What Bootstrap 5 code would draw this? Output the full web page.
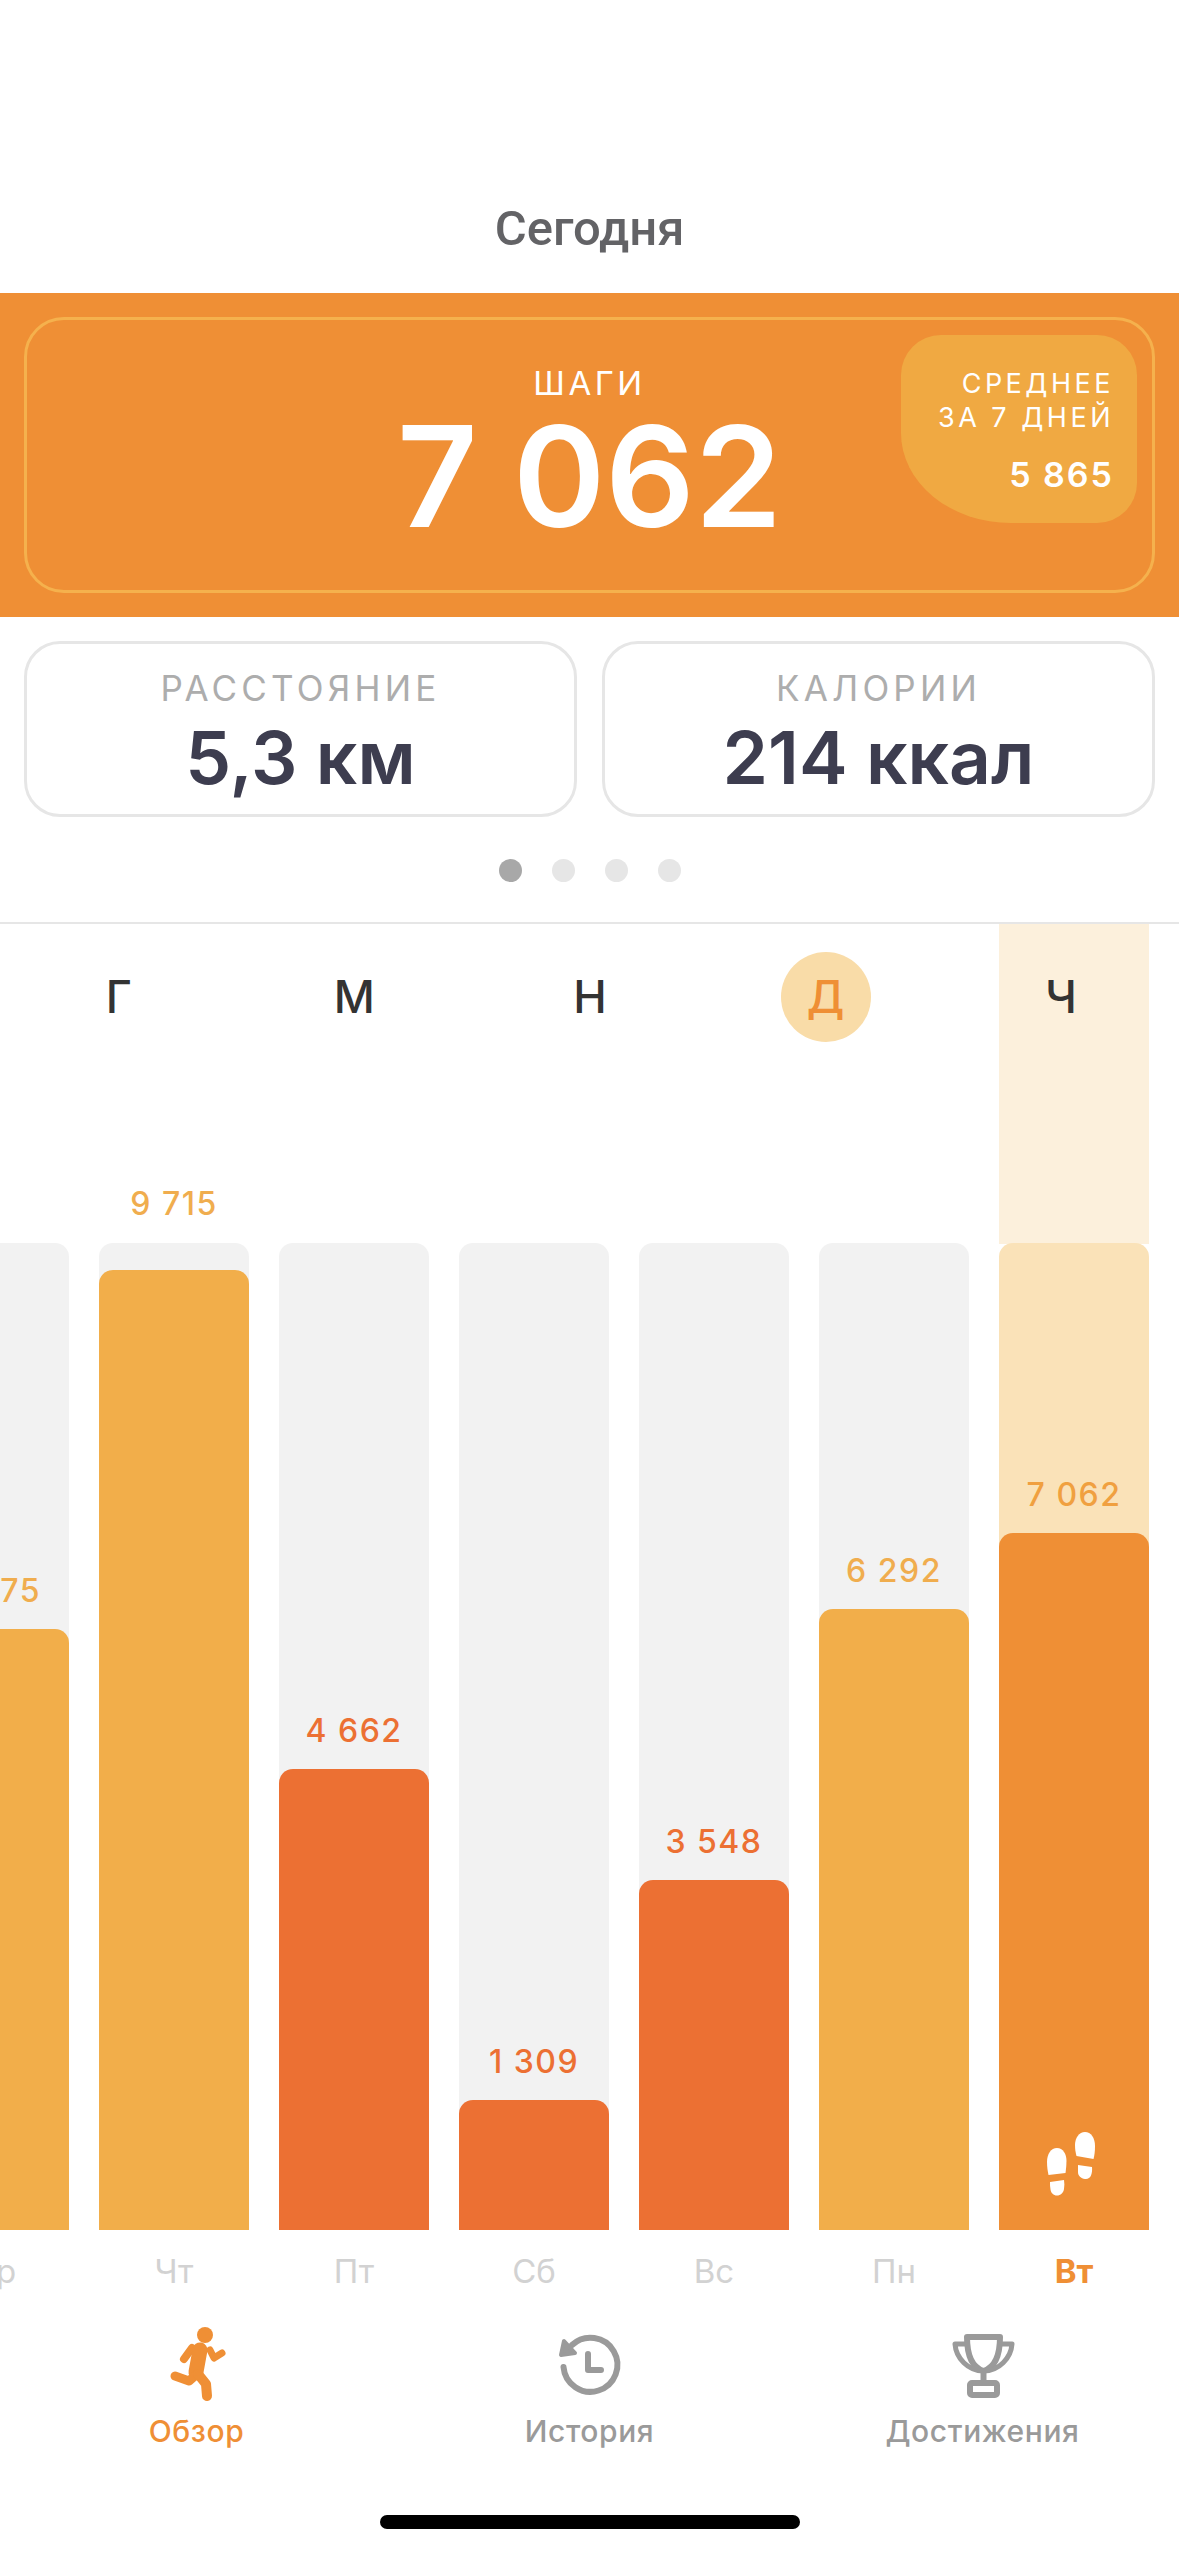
<!DOCTYPE html>
<html lang="ru">
<head>
  <meta charset="UTF-8" />
  <meta name="viewport" content="width=device-width, initial-scale=1.0"/>
  <title>Сегодня</title>
  <link href="https://cdn.jsdelivr.net/npm/bootstrap@5.3.0/dist/css/bootstrap.min.css" rel="stylesheet"/>
  <style>
    body { width: 1179px; height: 2556px; overflow: hidden; background: #fff; font-family: Inter, "Noto Sans", sans-serif; }

    .top-title { padding-top: 196px; height: 293px; font: 500 49px/66px Roboto, sans-serif; color: #636366; }

    .steps-band { background: #ef8f35; padding: 24px; color: #fff; }
    .steps-frame { height: 276px; border: 3px solid #f5b14d; border-radius: 40px; padding-top: 43px; }
    .steps-label { font-size: 33px; line-height: 40px; letter-spacing: 3.5px; }
    .steps-value { font-size: 140px; line-height: 130px; font-weight: 600; margin-top: 8px; }
    .avg-box { top: 15px; right: 15px; width: 236px; height: 188px; background: #f0a942; padding: 32px 23px 0 0;
      border-radius: 40px 40px 40px 110px / 40px 40px 40px 90px; }
    .avg-label { font-size: 27px; line-height: 34px; letter-spacing: 3.5px; }
    .avg-value { font-size: 34px; line-height: 40px; font-weight: 600; letter-spacing: 2px; margin-top: 20px; }

    .stats-wrap { padding: 24px 24px 0; gap: 25px; }
    .stat-box { width: 553px; height: 176px; border: 3px solid #e6e6e6; border-radius: 36px; padding-top: 24px; }
    .stat-label { font-size: 35px; line-height: 40px; letter-spacing: 4.2px; color: #adadad; }
    .stat-value { font-size: 73px; line-height: 88px; font-weight: 600; color: #3d3d4f; margin-top: 6px; }

    .page-dots { gap: 30px; margin-top: 42px; margin-bottom: 40px; }
    .page-dot { width: 23px; height: 23px; border-radius: 50%; background: #e6e6e6; }
    .page-dot.on { background: #a8a8a8; }

    .chart-area { border-top: 2px solid #e6e6e6; }
    .today-glow { top: 0; right: 30px; width: 150px; height: 320px; background: #fcf0dc; }
    .letters { padding: 28px 0 0 1px; height: 118px; margin-bottom: 141px; }
    .letter { height: 90px; font-size: 45px; font-weight: 500; color: #333; }
    .letter-mark { width: 90px; height: 90px; border-radius: 50%; background: #f9dca8; color: #ef8f35; }

    .bars, .days { gap: 30px; padding-right: 30px; }
    .bars { padding-top: 60px; }
    .bar-track { width: 150px; height: 987px; background: #f2f2f2; border-radius: 14px 14px 0 0; }
    .bar-track.today { background: #fae2b8; }
    .bar-fill { border-radius: 14px 14px 0 0; }
    .fill-good { background: #f2ae4a; }
    .fill-low { background: #ec7033; }
    .fill-today { background: #ef8f35; padding-bottom: 33px; }
    .bar-num { font-size: 32px; line-height: 30px; font-weight: 500; letter-spacing: 1.5px; margin-bottom: 23px; white-space: nowrap; }
    .bar-num.over { margin-bottom: 51px; }
    .num-good { color: #f0ad4e; }
    .num-low { color: #ec7033; }
    .num-today { color: #f0a040; }

    .days { margin-top: 21px; }
    .day-name { width: 150px; flex-shrink: 0; font-size: 33px; line-height: 40px; color: #d2d2d2; }
    .day-name.today { color: #ef8f35; font-weight: 700; }

    .tabs { margin-top: 31px; }
    .tab-text { font-size: 30px; line-height: 40px; font-weight: 500; letter-spacing: .6px; color: #9a9a9a; margin-top: 9px; }
    .tab-text.active { color: #ef8f35; }
    .home-bar { width: 420px; height: 14px; border-radius: 7px; background: #000; margin: 64px auto 0; }
  </style>
</head>
<body>

  <!-- Title -->
  <div class="top-title text-center">Сегодня</div>

  <!-- Steps -->
  <div class="steps-band">
    <div class="steps-frame position-relative text-center">
      <div class="steps-label">ШАГИ</div>
      <div class="steps-value">7 062</div>
      <div class="avg-box position-absolute text-end">
        <div class="avg-label">СРЕДНЕЕ<br>ЗА 7 ДНЕЙ</div>
        <div class="avg-value">5 865</div>
      </div>
    </div>
  </div>

  <!-- Distance, calories -->
  <div class="stats-wrap d-flex">
    <div class="stat-box text-center">
      <div class="stat-label">РАССТОЯНИЕ</div>
      <div class="stat-value">5,3 км</div>
    </div>
    <div class="stat-box text-center">
      <div class="stat-label">КАЛОРИИ</div>
      <div class="stat-value">214 ккал</div>
    </div>
  </div>

  <div class="page-dots d-flex justify-content-center">
    <div class="page-dot on"></div>
    <div class="page-dot"></div>
    <div class="page-dot"></div>
    <div class="page-dot"></div>
  </div>

  <!-- Chart -->
  <div class="chart-area position-relative">
    <div class="today-glow position-absolute"></div>

    <div class="letters row g-0 position-relative">
      <div class="col"><div class="letter d-flex align-items-center justify-content-center">Г</div></div>
      <div class="col"><div class="letter d-flex align-items-center justify-content-center">М</div></div>
      <div class="col"><div class="letter d-flex align-items-center justify-content-center">Н</div></div>
      <div class="col"><div class="letter letter-mark mx-auto d-flex align-items-center justify-content-center">Д</div></div>
      <div class="col"><div class="letter d-flex align-items-center justify-content-center">Ч</div></div>
    </div>

    <div class="bars d-flex justify-content-end overflow-hidden position-relative">
      <div class="bar-track flex-shrink-0 d-flex flex-column justify-content-end text-center">
        <div class="bar-num flex-shrink-0 num-good">6 075</div>
        <div class="bar-fill flex-shrink-0 fill-good" style="height: 601px"></div>
      </div>
      <div class="bar-track flex-shrink-0 d-flex flex-column justify-content-end text-center">
        <div class="bar-num over flex-shrink-0 num-good">9 715</div>
        <div class="bar-fill flex-shrink-0 fill-good" style="height: 960px"></div>
      </div>
      <div class="bar-track flex-shrink-0 d-flex flex-column justify-content-end text-center">
        <div class="bar-num flex-shrink-0 num-low">4 662</div>
        <div class="bar-fill flex-shrink-0 fill-low" style="height: 461px"></div>
      </div>
      <div class="bar-track flex-shrink-0 d-flex flex-column justify-content-end text-center">
        <div class="bar-num flex-shrink-0 num-low">1 309</div>
        <div class="bar-fill flex-shrink-0 fill-low" style="height: 130px"></div>
      </div>
      <div class="bar-track flex-shrink-0 d-flex flex-column justify-content-end text-center">
        <div class="bar-num flex-shrink-0 num-low">3 548</div>
        <div class="bar-fill flex-shrink-0 fill-low" style="height: 350px"></div>
      </div>
      <div class="bar-track flex-shrink-0 d-flex flex-column justify-content-end text-center">
        <div class="bar-num flex-shrink-0 num-good">6 292</div>
        <div class="bar-fill flex-shrink-0 fill-good" style="height: 621px"></div>
      </div>
      <div class="bar-track today flex-shrink-0 d-flex flex-column justify-content-end text-center">
        <div class="bar-num flex-shrink-0 num-today">7 062</div>
        <div class="bar-fill flex-shrink-0 fill-today d-flex align-items-end justify-content-center" style="height: 697px">
          <svg width="60" height="67" viewBox="44 32 60 67" fill="#fff">
            <path d="M57 50c6 0 9.500 6 9.500 13 0 4-.5 8-1 12l-17 2c-.8-4-1.500-8-1.500-13 0-8 4-14 10-14z"/>
            <path d="M50 84l14-2c.5 3 .5 6 0 9-.6 4-3.500 6.500-7 6.500s-6-2.500-6.500-6c-.4-2.500-.6-5-.5-7.500z"/>
            <path d="M85 34c6 0 10 6 10 14 0 5-.5 9-1.500 13l-17-3c-1-3.500-1.500-7-1.500-11 0-7 4-13 10-13z"/>
            <path d="M78 67l14 2c.3 3 0 6-1 8.500-1 2.500-3.500 4-6 3.500-4-.6-7-3-7-7 0-2.500 0-5 0-7z"/>
          </svg>
        </div>
      </div>
    </div>

    <div class="days d-flex justify-content-end overflow-hidden text-center">
      <div class="day-name">Ср</div>
      <div class="day-name">Чт</div>
      <div class="day-name">Пт</div>
      <div class="day-name">Сб</div>
      <div class="day-name">Вс</div>
      <div class="day-name">Пн</div>
      <div class="day-name today">Вт</div>
    </div>
  </div>

  <!-- Tab bar -->
  <div class="tabs row g-0 text-center">
    <div class="col">
      <svg class="d-block mx-auto" width="90" height="80" viewBox="20 22 90 80" fill="none" stroke="#ef8f35" stroke-linecap="round" stroke-linejoin="round">
        <circle cx="73" cy="35" r="8" fill="#ef8f35" stroke="none"/>
        <path d="M60 48l-8 11" stroke-width="8"/>
        <path d="M68 50L64 72" stroke-width="15"/>
        <path d="M78 50l4 8 8-5" stroke-width="7"/>
        <path d="M65 74l-8 7-14-5" stroke-width="9"/>
        <path d="M66 74l8 10 1 12" stroke-width="10"/>
      </svg>
      <div class="tab-text active">Обзор</div>
    </div>
    <div class="col">
      <svg class="d-block mx-auto" width="90" height="80" viewBox="14 22 90 80" fill="none" stroke="#9a9a9a" stroke-width="6" stroke-linecap="round" stroke-linejoin="round">
        <path d="M32.500 67A27 27 0 1 0 41 45"/>
        <path d="M33 41l-3 14 14-2z" fill="#9a9a9a" stroke-width="4"/>
        <path d="M57 54v16h13"/>
      </svg>
      <div class="tab-text">История</div>
    </div>
    <div class="col">
      <svg class="d-block mx-auto" width="90" height="80" viewBox="8 22 90 80" fill="none" stroke="#9a9a9a" stroke-width="6" stroke-linejoin="round">
        <path d="M37 37h33c0 16-4 30-16.500 34C41 67 37 53 37 37z"/>
        <path d="M37 44H25c1 14 13 27 28.500 27S81 58 82 44H70" stroke-width="5"/>
        <path d="M53.500 71v11"/>
        <rect x="40" y="83" width="27" height="12" rx="2"/>
      </svg>
      <div class="tab-text">Достижения</div>
    </div>
  </div>

  <div class="home-bar"></div>

  <script src="https://cdn.jsdelivr.net/npm/bootstrap@5.3.0/dist/js/bootstrap.bundle.min.js"></script>
</body>
</html>
